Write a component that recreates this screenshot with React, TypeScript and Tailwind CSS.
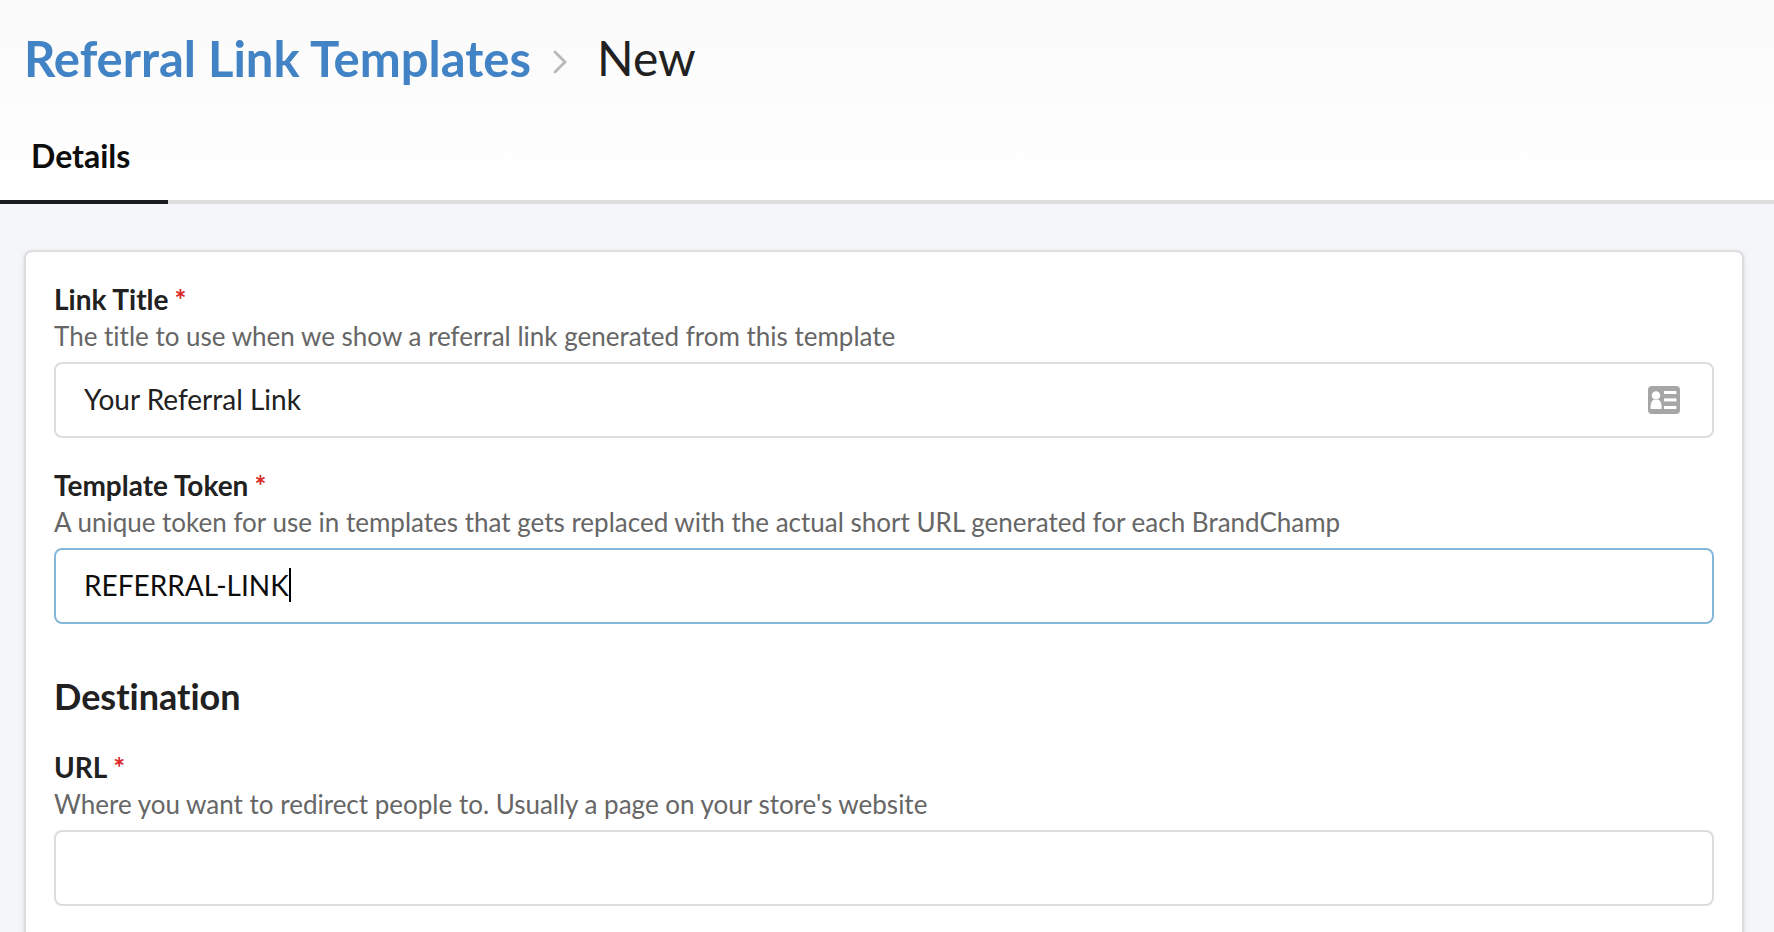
import { useState } from "react";
import type { ReactNode } from "react";

const boxClass =
  "flex h-[76px] w-full cursor-text items-center rounded-lg border-2 bg-white px-7";

function ContactCardIcon() {
  return (
    <svg viewBox="0 0 32 28" className="h-7 w-8 shrink-0" aria-hidden="true">
      <rect width="32" height="28" rx="4" fill="#a6a6a6" />
      <g fill="#fff">
        <circle cx="8" cy="9.4" r="4.2" />
        <path d="M2.6 23V20.5C2.6 16.5 4.2 14 6.2 13.4L8 14.2L9.8 13.4C12 14 13.6 16.5 13.6 20.5V23Z" />
        <rect x="16" y="5" width="12.4" height="3" />
        <rect x="16" y="12.4" width="12.4" height="3" />
        <rect x="16" y="20" width="12.4" height="3" />
      </g>
    </svg>
  );
}

function Field({
  id,
  label,
  hint,
  children,
}: {
  id: string;
  label: string;
  hint: string;
  children: ReactNode;
}) {
  return (
    <div>
      <label htmlFor={id} className="block text-[28px] leading-[38px] font-bold">
        {label}
        <span className="ml-1.5 text-[#db2828]">*</span>
      </label>
      <p id={`${id}-hint`} className="mb-2 text-[26px] leading-9 text-[#666]">
        {hint}
      </p>
      {children}
    </div>
  );
}

export default function App() {
  const [title, setTitle] = useState("Your Referral Link");
  const [token, setToken] = useState("REFERRAL-LINK");
  const [url, setUrl] = useState("");

  return (
    <div className="min-h-screen bg-[#f5f6fa] font-[Lato,sans-serif] text-[#212121] [font-variant-ligatures:none]">
      <header className="border-b-4 border-[#dddddd] bg-linear-to-b from-[#fafafa] to-white pt-7">
        <h1 className="flex items-center px-6 text-[48px] leading-[60px]">
          <a href="#templates" className="text-[49px] font-bold text-[#4183c4]">
            Referral Link Templates
          </a>
          <svg
            viewBox="0 0 14 24"
            className="mt-2 mr-[30px] ml-[22px] h-6 w-[14px]"
            fill="none"
            stroke="#b8b8b8"
            strokeWidth="2.8"
            strokeLinecap="round"
            aria-hidden="true"
          >
            <path d="M2 2L12 12L2 22" />
          </svg>
          <span>New</span>
        </h1>
        <nav className="mt-12 -mb-1 flex">
          <a
            href="#details"
            aria-current="page"
            className="border-b-4 border-[#1b1c1d] pr-[38px] pb-6 pl-[31px] text-[32px] leading-10 font-bold text-[#0d0d0d]"
          >
            Details
          </a>
        </nav>
      </header>

      <main className="pt-[46px] pr-[30px] pl-6">
        <form className="rounded-lg border-2 border-[#dddddd] bg-white px-7 pt-7 pb-14 shadow-[0_2px_4px_rgba(34,36,38,0.15)]">
          <div className="flex flex-col gap-7">
            <Field
              id="title"
              label="Link Title"
              hint="The title to use when we show a referral link generated from this template"
            >
              <div className={`${boxClass} border-[#dddddd]`}>
                <input
                  id="title"
                  aria-describedby="title-hint"
                  value={title}
                  onChange={(e) => setTitle(e.target.value)}
                  className="min-w-0 flex-1 pb-0.5 text-[28px] leading-[34px] outline-none"
                />
                <span className="pr-1">
                  <ContactCardIcon />
                </span>
              </div>
            </Field>
            <Field
              id="token"
              label="Template Token"
              hint="A unique token for use in templates that gets replaced with the actual short URL generated for each BrandChamp"
            >
              <label htmlFor="token" className={`${boxClass} border-[#85b7d9] pb-0.5`}>
                <input
                  id="token"
                  aria-describedby="token-hint"
                  value={token}
                  onChange={(e) => setToken(e.target.value)}
                  className="field-sizing-content text-[28px] leading-[34px] text-[#0d0d0d] caret-transparent outline-none"
                />
                <span className="h-[34px] w-[2px] bg-black" aria-hidden="true" />
              </label>
            </Field>
          </div>

          <h2 className="mt-[50px] mb-[30px] text-[36px] leading-[44px] font-bold">Destination</h2>

          <Field
            id="url"
            label="URL"
            hint="Where you want to redirect people to. Usually a page on your store's website"
          >
            <input
              id="url"
              type="url"
              aria-describedby="url-hint"
              value={url}
              onChange={(e) => setUrl(e.target.value)}
              className={`${boxClass} border-[#dddddd] text-[28px] outline-none`}
            />
          </Field>
        </form>
      </main>
    </div>
  );
}
